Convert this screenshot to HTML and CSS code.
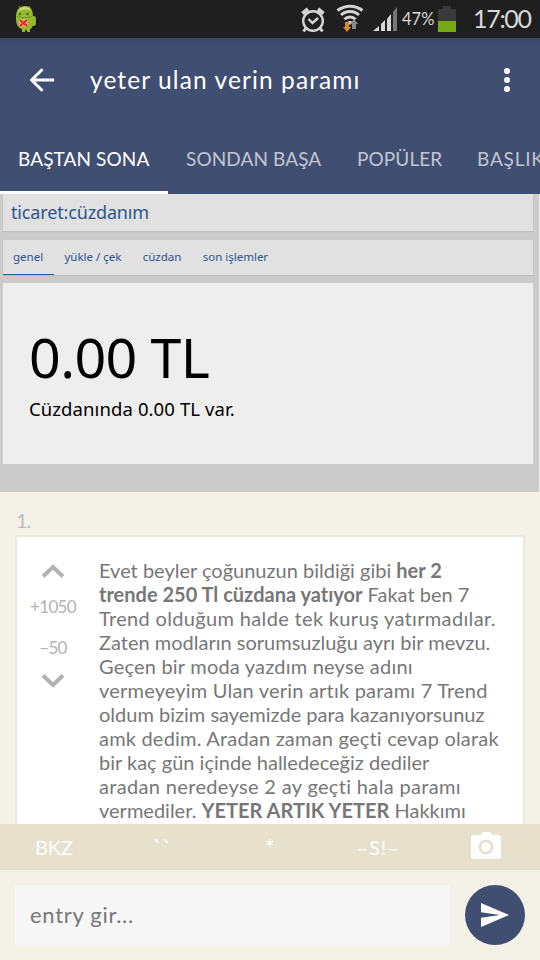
FILE: index.html
```html
<!DOCTYPE html>
<html lang="tr">

<head>
    <meta charset="utf-8">
    <title>yeter ulan verin paramı</title>
    <link rel="stylesheet" href="styles.css">
</head>

<body>

    <!-- Status bar -->
    <div class="statusbar">
        <svg class="droid" width="26" height="30" viewBox="0 0 26 30">
            <path d="M6 2l2 4M17 2l-2 4" stroke="#6d7f2b" stroke-width="1.2" />
            <ellipse cx="22" cy="18" rx="3" ry="6" fill="#151515" />
            <rect x="18" y="12" width="5" height="10" rx="2.5" fill="#93b82b" />
            <path d="M3 13C3 6 6 2 12 2s8 4 8 11v6c0 4-2 6-3 6v3h-3v-2h-2v2H9v-3c-4-1-6-5-6-10z" fill="#93ba2b" />
            <path d="M4 12.500c4 1.500 11 1.500 15 0" fill="none" stroke="#6f9420" />
            <path d="M5 8c1-4 4-5 7-5s5 1 6 4c-4-2-9-2-13 1z" fill="#c3dc6c" />
            <circle cx="7" cy="10" r="1.3" fill="#53682a" />
            <circle cx="14.500" cy="10" r="1.300" fill="#53682a" />
            <path d="M7 16l7 6M14 16l-7 6" stroke="#f3b39c" stroke-width="4" />
            <path d="M7 16l7 6M14 16l-7 6" stroke="#e5261d" stroke-width="2.2" />
        </svg>
        <div class="status-right">
            <svg class="alarm" width="24" height="26" viewBox="0 0 24 26">
                <g fill="none" stroke="#d4d4d4" stroke-width="2.4">
                    <circle cx="12" cy="14" r="9.800" />
                    <path d="M7.500 12l4 4 5.500-5" />
                    <path d="M1.500 6.500L7 2M22.500 6.500L17 2" stroke-width="4" />
                    <path d="M5 21l-2.500 3.500M19 21l2.500 3.500" stroke-width="3" />
                </g>
            </svg>
            <svg class="wifi" width="28" height="28" viewBox="0 0 28 28">
                <g fill="none" stroke="#d4d4d4" stroke-width="3">
                    <path d="M1.500 6.500C9 .800 19 .800 26.500 6.500" />
                    <path d="M5 11c5-4.700 13-4.700 18 0" />
                    <path d="M8.500 15.300c3-3 8-3 11 0" />
                </g>
                <path d="M11 18c1.800-1.500 4.200-1.500 6 0l-3 3z" fill="#d4d4d4" />
                <path d="M9 18h4v5h2l-4 5-4-5h2z" fill="#d78a2d" />
                <path d="M16 25v-5h-2l4-5 4 5h-2v5z" fill="#8a8a8a" />
            </svg>
            <svg class="signal" width="25" height="24" viewBox="0 0 25 24">
                <path d="M0 24l6-5v5zM8 24v-7l4-4v11zM14 24V12l4-5v17z" fill="#d8d8d8" />
                <path d="M20 24V5l4-5v24z" fill="#777" />
            </svg>
            <span class="percent">47%</span>
            <svg class="battery" width="18" height="26" viewBox="0 0 18 26">
                <path d="M5 0h8v3h5v12H0V3h5z" fill="#393939" />
                <path d="M0 15h18v11H0z" fill="#78a917" />
            </svg>
            <span class="clock">17:00</span>
        </div>
    </div>

    <!-- App bar + tabs -->
    <div class="appbar">
        <div class="titlebar">
            <svg class="back" width="24" height="24" viewBox="0 0 24 24">
                <path d="M24 12H2M12.500 1.200L1.700 12l10.800 10.800" fill="none" stroke="#fff" stroke-width="3" />
            </svg>
            <h1>yeter ulan verin paramı</h1>
            <svg class="more" width="6" height="24" viewBox="0 0 6 24">
                <circle cx="3" cy="3" r="3" />
                <circle cx="3" cy="12" r="3" />
                <circle cx="3" cy="21" r="3" />
            </svg>
        </div>
        <div class="tabs">
            <div class="tab active">BAŞTAN SONA</div>
            <div class="tab">SONDAN BAŞA</div>
            <div class="tab tab-pop">POPÜLER</div>
            <div class="tab tab-last">BAŞLIK</div>
        </div>
    </div>

    <div class="content">
        <!-- Wallet -->
        <div class="wallet">
            <div class="wallet-head">ticaret:cüzdanım</div>
            <div class="wallet-nav">
                <span class="current">genel</span>
                <span>yükle / çek</span>
                <span>cüzdan</span>
                <span>son işlemler</span>
            </div>
            <div class="wallet-body">
                <div class="balance">0.00 TL</div>
                <div class="balance-text">Cüzdanında 0.00 TL var.</div>
            </div>
        </div>

        <!-- Entry -->
        <div class="entry-no">1.</div>
        <div class="entry">
            <div class="votes">
                <svg width="24" height="14" viewBox="0 0 24 14">
                    <path d="M2 12.500l10-9.500 10 9.500" />
                </svg>
                <span class="up">+1050</span>
                <span class="down">−50</span>
                <svg width="24" height="14" viewBox="0 0 24 14">
                    <path d="M2 1.500L12 11l10-9.500" />
                </svg>
            </div>
            <p class="text">
                Evet beyler çoğunuzun bildiği gibi <b>her 2</b><br>
                <b>trende 250 Tl cüzdana yatıyor</b> Fakat ben 7<br>
                <span class="wider">Trend olduğum halde tek kuruş yatırmadılar.</span><br>
                Zaten modların sorumsuzluğu ayrı bir mevzu.<br>
                <span class="wide">Geçen bir moda yazdım neyse adını</span><br>
                <span class="wide">vermeyeyim Ulan verin artık paramı 7 Trend</span><br>
                oldum bizim sayemizde para kazanıyorsunuz<br>
                <span class="wide">amk dedim. Aradan zaman geçti cevap olarak</span><br>
                bir kaç gün içinde halledeceğiz dediler<br>
                <span class="wider">aradan neredeyse 2 ay geçti hala paramı</span><br>
                vermediler. <b>YETER ARTIK YETER</b> Hakkımı
            </p>
        </div>
    </div>

    <!-- Format buttons -->
    <div class="format">
        <span>BKZ</span>
        <span class="ticks">``</span>
        <span class="star">*</span>
        <span class="spoiler">–S!–</span>
        <span>
            <svg width="30" height="27" viewBox="0 0 30 27">
                <path fill-rule="evenodd" d="M9.500 3L12 0h7l2.500 3H27a3 3 0 0 1 3 3v18a3 3 0 0 1-3 3H3a3 3 0 0 1-3-3V6a3 3 0 0 1 3-3zM15 7.500a7.500 7.500 0 1 0 0 15 7.500 7.500 0 1 0 0-15z" fill="#fff" />
                <circle cx="15" cy="15" r="4.800" fill="#fff" />
            </svg>
        </span>
    </div>

    <!-- Reply box -->
    <div class="reply">
        <div class="input">entry gir...</div>
        <div class="send">
            <svg width="28" height="24" viewBox="0 0 28 24">
                <path d="M0 0l28 12L0 24v-9.300L19 12 0 9.300z" fill="#fff" />
            </svg>
        </div>
    </div>

</body>

</html>
```
FILE: styles.css
```css
* {
    box-sizing: border-box;
}

body {
    margin: 0;
    width: 540px;
    height: 960px;
    display: flex;
    flex-direction: column;
    overflow: hidden;
    background: #f4f2e6;
    font-family: Lato, "Open Sans", sans-serif;
    font-variant-ligatures: none;
}

svg {
    display: block;
    flex: none;
}

/* Status bar */

.statusbar {
    flex: none;
    display: flex;
    justify-content: space-between;
    height: 38px;
    padding: 4px 9px 0 13px;
    background: #1f1f1f;
    color: #d8d8d8;
}

.status-right {
    display: flex;
}

.alarm {
    margin: 3px 11px 0 0;
}

.wifi {
    margin-right: 9px;
}

.signal {
    margin: 3px 4px 0 0;
}

.percent {
    width: 36px;
    font-size: 16.5px;
    line-height: 30px;
}

.battery {
    margin: 2px 17px 0 0;
}

.clock {
    width: 58px;
    font-size: 25px;
    line-height: 29px;
    white-space: nowrap;
    letter-spacing: -1.3px;
}

/* App bar */

.appbar {
    flex: none;
    height: 156px;
    background: linear-gradient(#3b4769, #404e72 10px);
    color: #fff;
}

.titlebar {
    display: flex;
    align-items: center;
    height: 84px;
    padding: 0 30px;
}

.titlebar h1 {
    flex: 1;
    margin: 0 0 0 36px;
    font-size: 24.5px;
    font-weight: normal;
    line-height: 30px;
    letter-spacing: 1.1px;
}

.more {
    fill: #fff;
}

.tabs {
    display: flex;
    height: 72px;
    overflow: hidden;
}

.tab {
    flex: none;
    height: 72px;
    padding: 0 18px;
    font-size: 19px;
    line-height: 73px;
    letter-spacing: 0.1px;
    white-space: nowrap;
    color: #c0c5d0;
    width: 171px;
}

.tab.active {
    width: 168px;
    color: #fff;
    border-bottom: 3px solid #fff;
}

.tab-pop {
    width: 120px;
}

.tab-last {
    letter-spacing: 0.8px;
}

/* Content */

.content {
    flex: none;
    height: 630px;
    overflow: hidden;
}

.wallet {
    height: 298px;
    padding: 0 6px 0 3px;
    background: #cbcbcb;
    border-right: 1px solid #f4f2e6;
    font-family: "Noto Sans", "Open Sans", sans-serif;
}

.wallet-head,
.wallet-nav {
    background: #e1e1e1;
    box-shadow: 0 1px 1px #bdbdbd;
    color: #2b5591;
}

.wallet-head {
    height: 37px;
    padding-left: 8px;
    font-size: 18px;
    line-height: 37px;
    letter-spacing: -0.15px;
}

.wallet-nav {
    display: flex;
    height: 35px;
    margin-top: 9px;
    font-size: 11.5px;
    line-height: 34px;
}

.wallet-nav span {
    padding: 0 11.3px 0 10px;
}

.wallet-nav .current {
    border-bottom: 1px solid #2b5f9e;
}

.wallet-body {
    height: 181px;
    margin-top: 8px;
    padding: 36px 26px;
    background: #eee;
    box-shadow: 0 0 1px #d5d5d5;
    color: #000;
}

.balance {
    font-size: 55.5px;
    line-height: 75px;
    letter-spacing: -0.6px;
}

.balance-text {
    padding-top: 2px;
    font-size: 18.5px;
    line-height: 26px;
    letter-spacing: 0.1px;
}

.entry-no {
    height: 43px;
    padding: 16px 0 0 16px;
    font-size: 20px;
    line-height: 25px;
    letter-spacing: -1px;
    color: #bbb;
}

.entry {
    display: flex;
    height: 400px;
    margin: 0 15px;
    background: #fff;
    border: 2px solid #ebe9df;
    border-radius: 3px;
}

.votes {
    display: flex;
    flex-direction: column;
    align-items: center;
    width: 72px;
    padding-top: 27px;
    font-size: 17px;
    line-height: 20px;
    letter-spacing: -0.7px;
    color: #b2b2b2;
}

.votes path {
    fill: none;
    stroke: #b2b2b2;
    stroke-width: 4;
}

.up {
    margin-top: 19px;
}

.down {
    margin: 21px 0 16px;
}

.text {
    margin: 21px 0 0 10px;
    font-size: 20px;
    line-height: 24px;
    white-space: nowrap;
    color: #777;
}

.wide {
    letter-spacing: 0.2px;
}

.wider {
    letter-spacing: 0.34px;
}

/* Bottom bars */

.format {
    flex: none;
    display: flex;
    height: 46px;
    background: #e6e0cc;
    color: #fff;
    font-size: 20px;
    line-height: 47px;
    text-align: center;
}

.format span {
    flex: 1;
}

.format .ticks {
    font-size: 24px;
}

.format .star {
    font-size: 23px;
}

.format .spoiler {
    letter-spacing: 1px;
}

.format svg {
    margin: 8px auto 0;
}

.reply {
    display: flex;
    gap: 15px;
    padding: 15px;
}

.input {
    width: 435px;
    height: 60px;
    padding-left: 15px;
    background: #f7f7f7;
    color: #777;
    font-size: 22px;
    line-height: 60px;
    letter-spacing: 0.7px;
}

.send {
    display: flex;
    align-items: center;
    width: 60px;
    height: 60px;
    padding-left: 16px;
    border-radius: 50%;
    background: #404e72;
}
```
